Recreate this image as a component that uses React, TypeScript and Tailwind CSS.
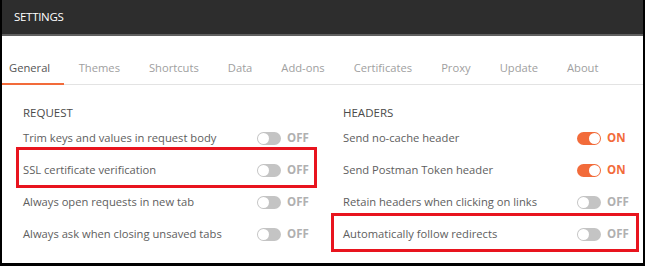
import React from 'react';

const tabs = ['General', 'Themes', 'Shortcuts', 'Data', 'Add-ons', 'Certificates', 'Proxy', 'Update', 'About'];

const request = [
  { label: 'Trim keys and values in request body', on: false },
  { label: 'SSL certificate verification', on: false },
  { label: 'Always open requests in new tab', on: false },
  { label: 'Always ask when closing unsaved tabs', on: false },
];

const headers = [
  { label: 'Send no-cache header', on: true },
  { label: 'Send Postman Token header', on: true },
  { label: 'Retain headers when clicking on links', on: false },
  { label: 'Automatically follow redirects', on: false },
];

function Toggle({ on }: { on: boolean }) {
  return (
    <div className="flex items-center">
      <div
        className={
          on
            ? 'w-[24px] h-[13px] rounded-full bg-[#f26b3a] flex items-center justify-end pr-[1px]'
            : 'w-[24px] h-[13px] rounded-full bg-[#c4c4c4] flex items-center justify-start pl-[1px]'
        }
      >
        <div className="w-[11px] h-[11px] rounded-full bg-white" />
      </div>
      <span
        className={
          on
            ? 'ml-[6px] w-[22px] text-[11.5px] font-bold text-[#f26b3a]'
            : 'ml-[6px] w-[22px] text-[11.5px] font-bold text-[#b0b0b0]'
        }
      >
        {on ? 'ON' : 'OFF'}
      </span>
    </div>
  );
}

function Section({ title, rows }: { title: string; rows: { label: string; on: boolean }[] }) {
  return (
    <div className="w-[286px]">
      <div className="h-[17px] text-[11.5px] text-[#4a4a4a] leading-[16px]">{title}</div>
      {rows.map((r) => (
        <div key={r.label} className="h-[32px] flex items-center justify-between text-[11.2px] text-[#5e5e5e]">
          <span>{r.label}</span>
          <Toggle on={r.on} />
        </div>
      ))}
    </div>
  );
}

export default function App() {
  return (
    <div
      className="relative w-[645px] h-[266px] bg-white border-l-2 border-r-2 border-b-[3px] border-black overflow-hidden"
      style={{ fontFamily: '"Open Sans", "Liberation Sans", sans-serif' }}
    >
      <div className="h-[36px] bg-[#2d2d2d] border-b-2 border-[#606060] flex items-center pl-[12px]">
        <span className="text-white text-[11.5px] tracking-[-0.3px]">SETTINGS</span>
      </div>
      <div className="h-[49px] flex items-end border-b border-[#e3e3e3]">
        {tabs.map((t, i) => (
          <div
            key={t}
            className={
              i === 0
                ? 'pl-[7px] pr-[14px] pb-[6px] border-b-2 border-[#f26b3a] text-[11.2px] text-[#555] -mb-px'
                : 'px-[14.5px] pb-[7px] text-[11.2px] text-[#a0a0a0]'
            }
          >
            {t}
          </div>
        ))}
      </div>
      <div className="flex pl-[21px] pt-[20px] gap-[34px]">
        <Section title="REQUEST" rows={request} />
        <Section title="HEADERS" rows={headers} />
      </div>
      <div className="absolute left-[14px] top-[147px] w-[301px] h-[41px] border-[3px] border-[#e8141e]" />
      <div className="absolute left-[329px] top-[213px] w-[308px] h-[39px] border-[3px] border-[#e8141e]" />
    </div>
  );
}
